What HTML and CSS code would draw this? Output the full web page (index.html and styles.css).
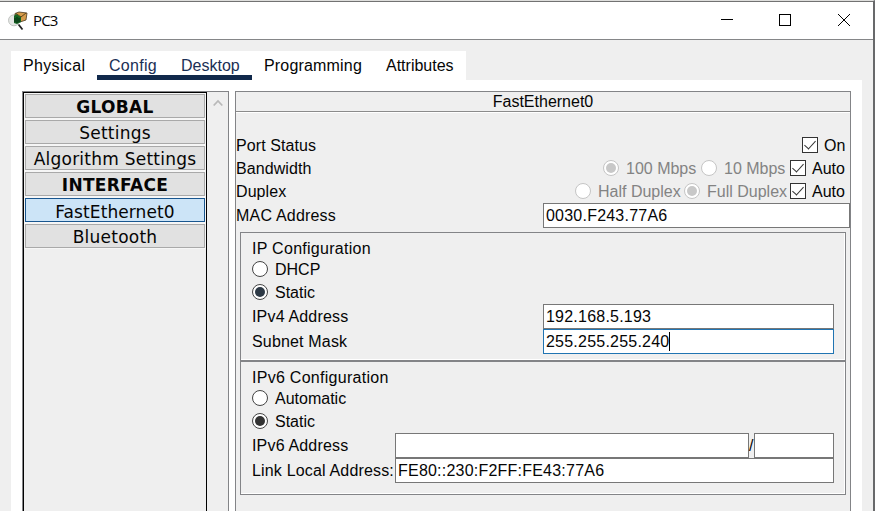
FILE: index.html
```html
<!DOCTYPE html>
<html lang="en">
<head>
<meta charset="utf-8">
<title>PC3</title>
<link rel="stylesheet" href="styles.css">
</head>
<body>
<div class="window">
  <header class="titlebar">
    <svg class="app-icon" width="20" height="20" viewBox="0 0 20 20">
      <circle cx="6" cy="9.300" r="5.500" fill="#e4e6e4" stroke="#b4b7b4" stroke-width=".8"/>
      <path d="M7 2.500l4-1.500 8 1-1 7-6 2-5-1z" fill="#d59b4a" stroke="#493921" stroke-width=".8"/>
      <path d="M8 2.500l5 3.500 5-4" fill="none" stroke="#5f431d" stroke-width="1"/>
      <path d="M6 5l2-2 5 3v5l-4 2-3-1z" fill="#156322"/>
      <path d="M7 11V7m2 5V6m2 5V7" stroke="#072c12" stroke-width="1"/>
      <path d="M10.500 13.500l4 5" stroke="#222" stroke-width="1.800"/>
    </svg>
    <span class="title">PC3</span>
    <svg class="controls" width="130" height="14" viewBox="0 0 130 14" fill="none" stroke="#000" shape-rendering="crispEdges">
      <path d="M0 6.500h12"/>
      <rect x="58.500" y="1.500" width="11" height="11"/>
      <path d="M117 1l12 12M129 1l-12 12" shape-rendering="auto"/>
    </svg>
  </header>
  <nav class="tabs">
    <span class="tab t1">Physical</span><span class="tab t2 on">Config</span><span class="tab t3 on">Desktop</span><span class="tab t4">Programming</span><span class="tab t5">Attributes</span>
  </nav>
  <main class="page">
    <aside class="side">
      <div class="list">
        <div class="item head"><span>GLOBAL</span></div>
        <div class="item"><span>Settings</span></div>
        <div class="item"><span>Algorithm Settings</span></div>
        <div class="item head"><span>INTERFACE</span></div>
        <div class="item selected"><span>FastEthernet0</span></div>
        <div class="item"><span>Bluetooth</span></div>
      </div>
      <svg class="arrow" width="10" height="8" viewBox="0 0 10 8"><path d="M.7 6.500L5 2l4.300 4.500" fill="none" stroke="#b9b9b9" stroke-width="1.800"/></svg>
    </aside>
    <section class="panel">
      <h1>FastEthernet0</h1>
      <div class="ports">
        <div class="row"><span>Port Status</span><span class="opts"><i class="check"></i><b class="on-label">On</b></span></div>
        <div class="row"><span>Bandwidth</span><span class="opts off"><i class="radio dot"></i><b class="w-100">100 Mbps</b><i class="radio"></i><b class="w-10">10 Mbps</b><i class="check"></i><b class="auto">Auto</b></span></div>
        <div class="row"><span>Duplex</span><span class="opts off"><i class="radio"></i><b class="w-half">Half Duplex</b><i class="radio dot"></i><b class="w-full">Full Duplex</b><i class="check"></i><b class="auto">Auto</b></span></div>
        <div class="row mac"><span>MAC Address</span><span class="field">0030.F243.77A6</span></div>
      </div>
      <div class="group v4">
        <div class="line heading">IP Configuration</div>
        <div class="line choice"><i class="radio"></i><b>DHCP</b></div>
        <div class="line choice"><i class="radio dot blue"></i><b>Static</b></div>
        <div class="line"><span class="label wide">IPv4 Address</span><span class="field">192.168.5.193</span></div>
        <div class="line"><span class="label wide">Subnet Mask</span><span class="field focus">255.255.255.240<i class="caret"></i></span></div>
      </div>
      <div class="group v6">
        <div class="line heading">IPv6 Configuration</div>
        <div class="line choice"><i class="radio"></i><b>Automatic</b></div>
        <div class="line choice"><i class="radio dot"></i><b>Static</b></div>
        <div class="line"><span class="label">IPv6 Address</span><span class="field"></span><span class="slash">/</span><span class="field prefix"></span></div>
        <div class="line"><span class="label">Link Local Address:</span><span class="field">FE80::230:F2FF:FE43:77A6</span></div>
      </div>
    </section>
  </main>
</div>
</body>
</html>
```

FILE: styles.css
```css
* { box-sizing: border-box; }
body { margin: 0; overflow: hidden; font: 16px/20px "Liberation Sans", Arial, sans-serif; color: #050505; }
i, b { font-style: normal; font-weight: normal; }
.window { width: 875px; height: 511px; background: #efefef; border-top: 1px solid #dededc; border-right: 2px solid #68696b; display: flex; flex-direction: column; }
.titlebar { height: 39px; flex: none; background: #fff; border-top: 1px solid #727272; border-bottom: 1px solid #858688; display: flex; align-items: center; padding-left: 8px; }
.app-icon { margin-top: 1px; }
.title { font: 15px/20px "Open Sans", sans-serif; letter-spacing: -.8px; margin: -1px 0 0 5px; }
.controls { margin: -1px 22px 0 auto; }
.tabs { width: 455px; height: 29px; flex: none; margin: 11px 0 0 11px; background: #fff; display: flex; line-height: 29px; white-space: nowrap; }
.tab { padding-left: 12px; height: 29px; }
.t1 { width: 86px; letter-spacing: .35px; }
.t2 { width: 72px; letter-spacing: .3px; }
.t3 { width: 83px; }
.t4 { width: 122px; letter-spacing: .18px; }
.on { color: #1a2f55; border-bottom: 5px solid #11294b; }
.page { width: 851px; flex: 1; margin-left: 11px; background: #fff; display: flex; padding: 11px 11px 0; gap: 6px; }
.side { width: 207px; border: 1px solid #838487; border-bottom: 0; background: #efefef; display: flex; }
.list { width: 184px; border: 1px solid #000; border-bottom: 0; padding: 1px 1px 0; }
.item { height: 24px; margin-bottom: 2px; border: 1px solid #a9a9a9; background: #e1e1e1; box-shadow: 0 0 0 1px #f6f6f6; font: 17px/24px "DejaVu Sans", Verdana, sans-serif; letter-spacing: .24px; text-align: center; white-space: nowrap; }
.head { font-weight: bold; letter-spacing: .3px; }
.selected { background: #cce4f7; border-color: #19568f; line-height: 26px; letter-spacing: .1px; }
.arrow { margin: 7px 0 0 6px; }
.panel { width: 616px; border: 1px solid #838487; border-bottom: 0; background: #efefef; }
h1 { height: 20px; margin: 0; border-bottom: 1px solid #8b8b8b; box-shadow: 0 1px #fff; text-align: center; font: 16px/19px "Liberation Sans", Arial, sans-serif; }
.ports { padding-top: 22px; }
.row { height: 23px; display: flex; justify-content: space-between; align-items: center; }
.opts { display: flex; align-items: center; padding-right: 5px; margin-top: -1px; }
.opts b, .choice b { padding-top: 2px; }
.row > span:first-child { letter-spacing: .08px; }
.check { width: 16px; height: 16px; border: 1px solid #333; background: #fff; display: flex; justify-content: center; }
.check::before { content: ""; width: 5px; height: 10px; border: solid #333; border-width: 0 1.500px 1.500px 0; transform: rotate(42deg); }
.on-label, .auto { padding-left: 6px; color: #050505; }
.on-label { width: 27px; }
.auto { width: 39px; }
.off { color: #838383; }
.radio { width: 16px; height: 16px; flex: none; border: 1px solid #444; border-radius: 50%; background: #fff; display: flex; align-items: center; justify-content: center; }
.dot::before { content: ""; width: 10px; height: 10px; border-radius: 50%; background: #333; }
.blue::before { background: #2d3945; }
.off .radio { border-color: #c5c5c5; }
.off .dot::before { background: #c8c8c8; }
.w-100, .w-10, .w-half, .w-full { padding-left: 7px; white-space: nowrap; }
.w-100 { width: 82px; }
.w-10 { width: 73px; }
.w-half { width: 93px; }
.w-full { width: 90px; }
.field { height: 25px; border: 1px solid #777; background: #fff; padding-left: 2px; line-height: 24px; color: #050505; flex: 1; display: flex; align-items: center; white-space: nowrap; letter-spacing: .22px; }
.mac { height: 25px; }
.row.mac > span:first-child { letter-spacing: .2px; }
.mac .field { flex: none; width: 307px; }
.group { width: 606px; margin-left: 4px; border: 1px solid #838487; box-shadow: inset -1px -1px #fff; padding: 5px 11px 0; }
.v4 { height: 129px; margin-top: 4px; }
.v6 { height: 134px; padding-top: 5px; }
.line { height: 20px; display: flex; align-items: center; white-space: nowrap; }
.heading { letter-spacing: .28px; padding-top: 1px; }
.choice { height: 23px; gap: 7px; padding-bottom: 1px; }
.line:nth-child(n+4) { height: 25px; }
.label { width: 143px; flex: none; letter-spacing: .17px; }
.wide { width: 291px; }
.field.focus { border-color: #2074b2; }
.caret { width: 1px; height: 19px; background: #000; }
.slash { width: 5px; }
.prefix { flex: none; width: 80px; }
```
